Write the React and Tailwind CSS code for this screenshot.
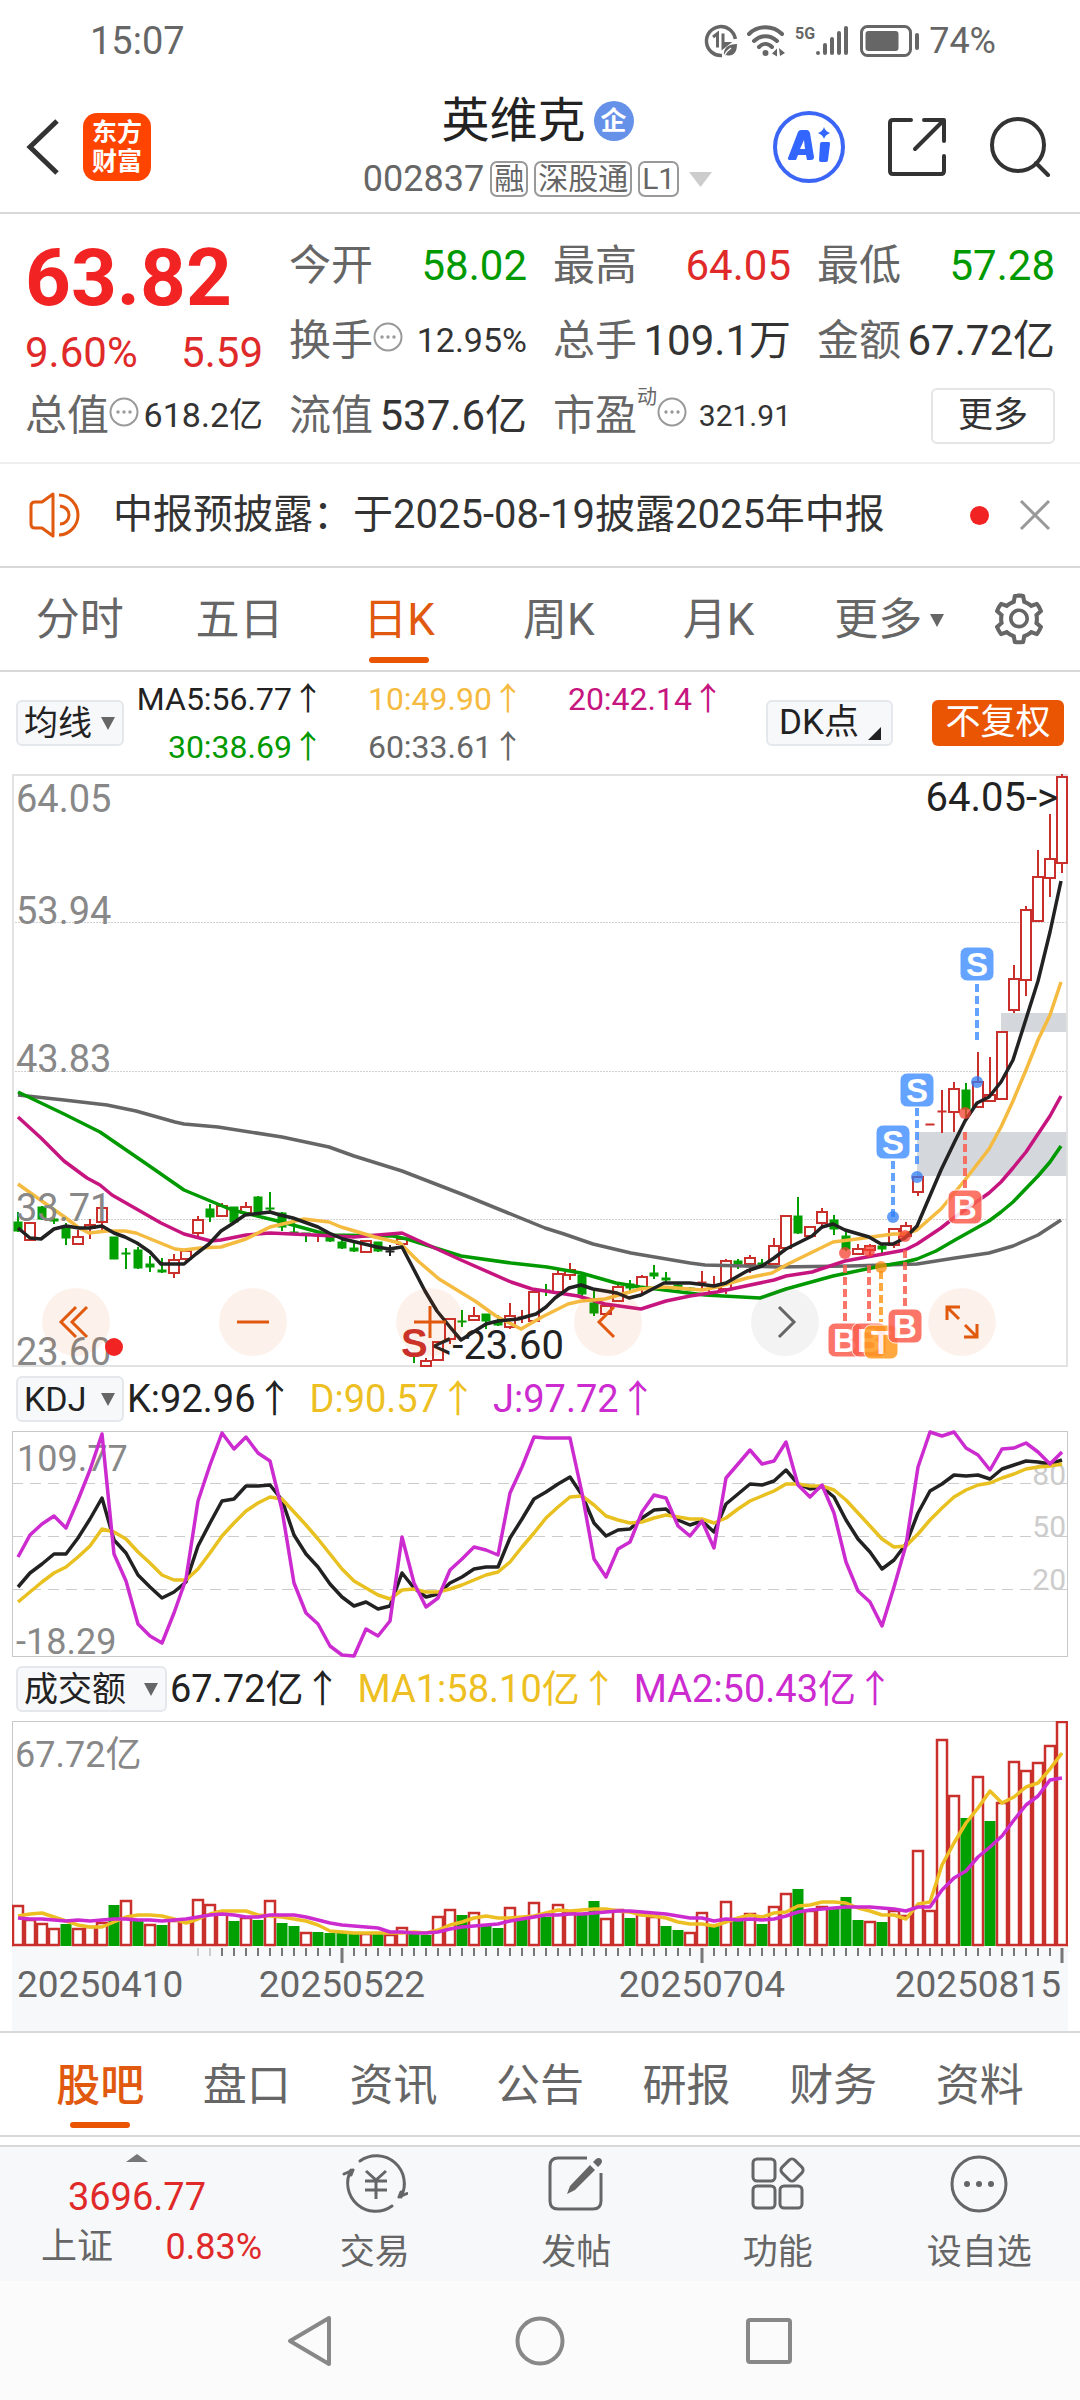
import { useState } from 'react';
import { AiOutlineSetting } from 'react-icons/ai';

// [direction, high, body top, body bottom, low], top of the panel is 0
const CANDLES = [
  ['g', 438, 448, 457, 458], ['r', 449, 449, 466, 466], ['g', 432, 433, 445, 446], ['g', 438, 445, 447, 450],
  ['g', 449, 454, 464, 471], ['r', 456, 463, 470, 470], ['r', 445, 451, 454, 465], ['r', 433, 434, 448, 456],
  ['g', 463, 463, 485, 485], ['g', 474, 479, 480, 495], ['g', 473, 476, 494, 495], ['g', 482, 490, 493, 498],
  ['g', 484, 496, 498, 499], ['r', 480, 486, 499, 504], ['r', 474, 477, 485, 487], ['r', 442, 446, 459, 465],
  ['g', 430, 435, 443, 448], ['r', 429, 432, 442, 443], ['g', 433, 433, 448, 449], ['r', 428, 433, 439, 440],
  ['g', 422, 423, 439, 439], ['g', 418, 434, 435, 437], ['g', 438, 439, 453, 457], ['g', 449, 458, 459, 459],
  ['g', 459, 459, 460, 468], ['r', 460, 461, 462, 468], ['g', 461, 462, 467, 468], ['g', 466, 468, 474, 475],
  ['g', 469, 474, 477, 478], ['r', 466, 467, 478, 479], ['g', 468, 468, 477, 478], ['k', 471, 477, 478, 482],
  ['r', 463, 465, 470, 471], ['g', 579, 581, 582, 589], ['r', 584, 587, 592, 593], ['r', 567, 568, 586, 587],
  ['r', 544, 545, 565, 570], ['g', 536, 547, 548, 553], ['r', 533, 542, 546, 547], ['g', 540, 540, 547, 555],
  ['g', 541, 547, 551, 552], ['r', 529, 542, 553, 555], ['r', 536, 543, 544, 549], ['r', 514, 518, 547, 548],
  ['g', 510, 516, 517, 522], ['r', 495, 500, 518, 520], ['r', 489, 496, 501, 506], ['g', 499, 501, 520, 522],
  ['g', 517, 529, 539, 542], ['r', 532, 532, 540, 541], ['r', 509, 513, 527, 528], ['g', 506, 510, 514, 517],
  ['r', 501, 503, 514, 521], ['g', 491, 499, 502, 505], ['g', 498, 504, 506, 509], ['g', 509, 511, 513, 516],
  ['g', 513, 514, 516, 517], ['r', 497, 508, 509, 517], ['r', 502, 513, 518, 519], ['r', 485, 487, 515, 520],
  ['g', 485, 487, 490, 495], ['r', 481, 484, 490, 499], ['g', 485, 489, 491, 493], ['r', 464, 472, 490, 490],
  ['r', 442, 442, 474, 474], ['g', 423, 442, 459, 460], ['r', 453, 453, 462, 463], ['r', 434, 438, 449, 455],
  ['g', 441, 446, 455, 461], ['g', 456, 462, 475, 477], ['r', 470, 475, 480, 481], ['r', 470, 472, 476, 481],
  ['g', 471, 472, 475, 480], ['r', 455, 455, 471, 474], ['r', 448, 452, 462, 464], ['r', 402, 403, 418, 422],
  ['r', 350, 350, 351, 351], ['r', 316, 337, 338, 359], ['r', 308, 315, 338, 358], ['g', 309, 316, 335, 343],
  ['r', 278, 308, 333, 334], ['r', 283, 321, 327, 328], ['r', 258, 258, 325, 326], ['r', 191, 205, 236, 239],
  ['r', 132, 136, 206, 222], ['r', 76, 103, 147, 148], ['r', 40, 85, 104, 123], ['r', 0, 3, 89, 99],
];

const AVERAGES = [
  { color: '#666666', points: '6,321 52,326 95,331 124,337 163,348 172,350 206,353 270,363 317,373 342,382 390,397 452,421 533,454 552,460 581,470 619,479 678,489 693,491 766,493 838,492 905,490 943,484 977,479 1001,472 1026,461 1049,446' },
  { color: '#009900', points: '6,318 52,340 88,358 136,391 172,416 220,436 270,448 317,461 381,462 395,465 449,482 499,489 535,493 569,499 604,509 628,513 693,521 748,524 774,515 821,502 869,492 893,488 905,485 924,477 943,466 977,447 989,438 1001,428 1026,402 1038,388 1049,372' },
  { color: '#c7157f', points: '6,343 29,364 52,387 75,404 88,411 100,421 149,449 172,460 199,467 209,466 234,461 258,459 302,461 342,463 390,459 449,486 499,508 520,515 566,522 593,530 629,535 654,527 678,522 705,518 762,506 774,502 800,498 833,487 893,476 905,470 929,454 943,443 977,419 989,408 1001,394 1014,378 1026,360 1038,342 1049,322' },
  { color: '#f5bb41', points: '6,410 34,430 54,444 67,454 77,459 95,457 113,457 124,459 163,475 172,476 188,474 209,473 234,465 258,453 292,445 317,448 329,453 363,463 388,469 406,487 427,505 463,527 484,542 509,555 530,543 556,530 569,527 593,525 628,515 652,513 690,516 705,513 735,504 760,499 774,491 821,468 845,465 881,460 893,460 905,456 929,435 953,406 977,375 989,353 1001,327 1014,296 1026,266 1038,241 1049,208' },
  { color: '#222222', points: '6,454 18,464 29,465 42,455 54,452 67,454 77,454 90,452 102,459 113,463 125,469 138,478 149,490 172,490 184,480 197,470 209,457 220,450 233,441 258,438 268,441 281,444 306,453 317,459 331,465 365,473 377,475 390,473 400,492 413,517 425,537 438,553 449,566 463,557 474,550 486,547 506,545 524,540 534,533 543,524 557,514 569,511 581,515 605,519 617,524 629,521 652,509 678,509 702,512 714,509 735,497 750,492 762,484 774,475 800,462 810,453 821,450 833,456 857,463 869,470 881,470 893,464 905,452 929,396 943,367 953,347 965,329 977,323 989,308 1001,286 1014,245 1026,207 1038,158 1049,107' },
];

const KDJ_K = [156, 142, 133, 123, 123, 107, 88, 67, 109, 122, 144, 156, 167, 161, 151, 115, 92, 70, 68, 55, 55, 54, 69, 104, 123, 136, 153, 166, 175, 171, 178, 175, 142, 157, 166, 163, 152, 146, 138, 136, 136, 107, 88, 68, 61, 53, 46, 64, 92, 105, 99, 98, 87, 79, 78, 89, 94, 90, 101, 73, 63, 53, 54, 50, 39, 53, 58, 56, 66, 89, 108, 121, 138, 129, 113, 82, 60, 53, 44, 45, 44, 48, 38, 34, 30, 31, 33, 29];
const KDJ_D = [171, 161, 151, 142, 136, 126, 115, 98, 101, 108, 121, 132, 144, 149, 149, 138, 122, 105, 92, 80, 72, 66, 68, 81, 94, 108, 123, 138, 150, 157, 164, 168, 159, 158, 161, 161, 158, 154, 149, 144, 141, 131, 116, 102, 87, 76, 66, 65, 74, 85, 89, 92, 91, 87, 84, 86, 88, 88, 92, 87, 78, 70, 65, 60, 53, 53, 55, 55, 59, 69, 82, 95, 108, 116, 115, 103, 89, 77, 66, 59, 54, 52, 47, 43, 38, 36, 35, 33];
const KDJ_J = [126, 104, 93, 85, 97, 69, 39, 3, 123, 150, 193, 205, 212, 182, 148, 70, 34, 2, 18, 6, 22, 30, 79, 152, 182, 193, 215, 224, 225, 198, 205, 190, 106, 152, 176, 167, 139, 128, 116, 119, 124, 62, 36, 6, 7, 7, 7, 62, 128, 146, 118, 111, 81, 64, 67, 95, 105, 90, 117, 47, 33, 19, 33, 30, 11, 54, 66, 54, 82, 131, 160, 171, 195, 156, 114, 36, 1, 5, 1, 17, 24, 39, 18, 17, 12, 21, 33, 21];

// a leading minus marks a falling day
const VOLUMES = [185, 199, 203, 208, -204, 208, 206, 202, -185, 180, -200, 204, -205, 200, 201, 179, 184, 193, -201, 197, -200, 180, -203, -206, 212, -212, -213, -212, -213, 213, -213, 214, 207, -214, -215, 196, 189, -195, 192, -205, -208, 187, -200, 182, -197, 184, 191, -194, -181, 198, 189, -198, 194, 196, -206, -210, 212, 192, -204, 181, -199, 193, -204, 186, 173, -169, 190, 186, -189, -177, -200, 201, -202, 190, 195, 130, 190, 19, 75, -98, 56, -101, 82, 41, 50, 42, 25, 1];
const VOLUME_MA1 = [195, 193, 192, 196, 200, 204, 206, 206, 201, 196, 194, 194, 195, 198, 202, 198, 193, 190, 190, 190, 194, 195, 196, 198, 200, 204, 210, 211, 212, 212, 212, 212, 212, 211, 212, 209, 204, 201, 197, 195, 197, 197, 196, 195, 192, 189, 190, 189, 188, 188, 190, 191, 194, 195, 197, 201, 203, 203, 205, 201, 197, 194, 196, 192, 191, 185, 184, 181, 181, 182, 187, 190, 194, 194, 198, 183, 181, 144, 122, 102, 87, 70, 82, 76, 66, 62, 48, 32];
const VOLUME_MA2 = [197, 198, 198, 199, 200, 199, 200, 199, 198, 198, 199, 199, 200, 199, 198, 196, 194, 193, 194, 196, 196, 194, 194, 194, 196, 199, 202, 204, 205, 206, 207, 211, 211, 212, 212, 211, 208, 206, 205, 204, 203, 200, 198, 196, 194, 194, 193, 193, 192, 191, 190, 190, 191, 192, 193, 195, 197, 197, 200, 198, 199, 198, 199, 198, 195, 191, 189, 188, 187, 186, 186, 186, 187, 188, 190, 186, 186, 169, 157, 150, 136, 126, 115, 99, 84, 75, 59, 57];

// x, dot y, dash start, dash end, badge centre y
const MARKS = [
  { text: 'S', x: 965, dot: 308, from: 210, to: 266, y: 190 },
  { text: 'S', x: 905, dot: 403, from: 334, to: 391, y: 316 },
  { text: 'S', x: 881, dot: 443, from: 387, to: 443, y: 368 },
  { text: 'B', x: 953, dot: 339, from: 358, to: 414, y: 433 },
  { text: 'B', x: 833, dot: 479, from: 491, to: 548, y: 566 },
  { text: 'B', x: 857, dot: 477, from: 491, to: 548, y: 566 },
  { text: 'T', x: 869, dot: 493, from: 497, to: 548, y: 568 },
  { text: 'B', x: 893, dot: 462, from: 476, to: 533, y: 552 },
];

const MARK_COLORS = {
  S: { badge: '#4a94ff', dot: '#2f7df6' },
  B: { badge: '#fb5f4e', dot: '#f5402f' },
  T: { badge: '#ff9a1f', dot: '#ff8c0a' },
};

const CANDLE_COLORS = { r: '#c9302c', g: '#00a000', k: '#222222' };

const dayX = (i) => 6 + i * 12;
const toPoints = (values) => values.map((y, i) => `${dayX(i)},${y}`).join(' ');

function Line({ points, color }) {
  return <polyline points={points} fill="none" stroke={color} strokeWidth="3.500" strokeLinejoin="round" />;
}

function StatusBar() {
  return (
    <div className="flex h-[82px] items-center justify-between pr-[84px] pl-[90px] text-[#666]">
      <span className="text-[38px] leading-[48px]">15:07</span>
      <div className="flex items-center">
        <svg width="34" height="34" viewBox="0 0 34 34" fill="none" stroke="currentColor" className="mr-[9px]">
          <path d="M18 31.5A14.5 14.5 0 1 1 31.3 15" strokeWidth="3.5" />
          <path d="M9 13l4.500-3.500v14M19 9.500v14l5-4h-4" strokeWidth="3" />
          <path d="M20 32c-1-8 4-12 13-12 0 9-4 13-11 11z" fill="currentColor" stroke="none" />
          <path d="M20 32c2-4 4-6 7-8" stroke="#fff" strokeWidth="1.500" />
        </svg>
        <svg width="40" height="34" viewBox="0 0 40 34" fill="none" stroke="currentColor" strokeWidth="4" className="mr-[8px]">
          <path d="M2 10c9-9 24-9 33 0M7 17c7-6.500 16-6.500 23 0M12 23c4-4 9-4 13 0" strokeLinecap="round" />
          <circle cx="18.500" cy="29" r="3" fill="currentColor" stroke="none" />
          <path d="M25 29.500l5-5v8M33 24v8M32 24l6 5-5 3z" fill="currentColor" stroke="none" />
        </svg>
        <span className="mb-[14px] text-[16px] leading-[16px] font-bold">5G</span>
        <svg width="34" height="32" viewBox="0 0 34 32" stroke="currentColor" strokeWidth="4" strokeLinecap="round" className="mr-[11px]">
          <path d="M3 28v.1M10 20v8M17 14v14M24 8v20M31 3v25" />
        </svg>
        <svg width="60" height="32" viewBox="0 0 60 32" fill="none" className="mr-[9px]">
          <rect x="1.500" y="1.500" width="49" height="29" rx="6" stroke="currentColor" strokeWidth="3" />
          <rect x="5.500" y="6" width="33" height="20" rx="3" fill="currentColor" />
          <path d="M57 10v13" stroke="currentColor" strokeWidth="4" strokeLinecap="round" />
        </svg>
        <span className="text-[36px] leading-[48px]">74%</span>
      </div>
    </div>
  );
}

function Tag({ children }) {
  return (
    <span className="flex h-[36px] items-center rounded-[7px] border-2 border-[#999] px-[2px] text-[30px] leading-[30px]">
      {children}
    </span>
  );
}

function Header() {
  return (
    <header className="grid h-[132px] grid-cols-[1fr_auto_1fr] items-center border-b-2 border-[#d8d8d8] pr-[29px] pl-[24px]">
      <div className="flex items-center">
        <button aria-label="返回" className="mr-[22px]">
          <svg width="37" height="58" viewBox="0 0 37 58" fill="none" stroke="#333" strokeWidth="5">
            <path d="M33 3L6 29l27 26" />
          </svg>
        </button>
        <div className="flex h-[68px] w-[68px] flex-col items-center justify-center rounded-[14px] bg-[#ff4400] text-[25px] leading-[29px] font-bold text-white">
          <span>东方</span>
          <span>财富</span>
        </div>
      </div>

      <div className="flex flex-col items-center">
        <h1 className="flex h-[56px] items-center gap-[8px] text-[48px] leading-[56px] text-[#222]">
          英维克
          <span className="flex h-[40px] w-[40px] items-center justify-center rounded-full bg-[#6592e8] text-[26px] leading-[40px] font-bold text-white">
            企
          </span>
        </h1>
        <div className="mt-[8px] flex h-[44px] items-center gap-[6px] text-[36px] leading-[44px] text-[#666]">
          <span>002837</span>
          <Tag>融</Tag>
          <Tag>深股通</Tag>
          <Tag>L1</Tag>
          <svg width="23" height="15" viewBox="0 0 23 15" className="ml-[4px]">
            <path d="M0 0h23L11.500 15z" fill="#ccc" />
          </svg>
        </div>
      </div>

      <div className="flex items-center justify-end">
        <button aria-label="AI" className="mr-[42px]">
          <svg width="72" height="72" viewBox="0 0 72 72" fill="none">
            <circle cx="36" cy="36" r="34" stroke="#3b66f5" strokeWidth="4" />
            <path d="M15 47l10-26q1-2 3-2h6q2 0 3 3l4 24q0 3-3 3h-4l-1-5h-8l-2 5h-5q-4 0-3-2zM27 38h5l-1-9z" fill="#3366ff" />
            <path d="M49 31h7q1 0 1 2l-2 16q0 2-2 2h-5q-2 0-2-2l1-16q0-2 2-2zM51 16q1 4 6 6-5 2-6 6-1-4-6-6 5-2 6-6z" fill="#3366ff" />
          </svg>
        </button>
        <button aria-label="分享" className="mr-[42px]">
          <svg width="60" height="60" viewBox="0 0 60 60" fill="none" stroke="#333" strokeWidth="4" strokeLinecap="round" strokeLinejoin="round">
            <path d="M24 3H6q-3 0-3 3v48q0 3 3 3h48q3 0 3-3V39M37 3h20v21M56 4L28 32" />
          </svg>
        </button>
        <button aria-label="搜索">
          <svg width="62" height="60" viewBox="0 0 62 60" fill="none" stroke="#333" strokeWidth="4" strokeLinecap="round">
            <circle cx="29" cy="28" r="26" />
            <path d="M47 46l12 12" />
          </svg>
        </button>
      </div>
    </header>
  );
}

function MoreDots() {
  return (
    <svg width="30" height="30" viewBox="0 0 30 30" fill="#999" className="mb-[8px] flex-none">
      <circle cx="15" cy="15" r="13.500" fill="none" stroke="#999" strokeWidth="2" />
      <circle cx="9" cy="15" r="1.700" />
      <circle cx="15" cy="15" r="1.700" />
      <circle cx="21" cy="15" r="1.700" />
    </svg>
  );
}

function Stat({ label, sup, dots, value, valueClass }) {
  return (
    <div className="flex h-[75px] items-center justify-between whitespace-nowrap">
      <dt className="flex items-center text-[42px] leading-[75px] text-[#666]">
        {label}
        {sup && <span className="mb-[38px] text-[20px] leading-[20px]">{sup}</span>}
        {dots && <MoreDots />}
      </dt>
      <dd className={valueClass || 'text-[42px] text-[#333]'}>{value}</dd>
    </div>
  );
}

function Quote() {
  return (
    <section className="grid grid-cols-4 gap-x-[26px] border-b-2 border-[#eee] px-[25px] pt-[14px] pb-[9px]">
      <div>
        <div className="flex h-[100px] items-center text-[80px] leading-[100px] font-bold text-[#f22323]">63.82</div>
        <div className="flex h-[50px] items-center justify-between text-[42px] leading-[50px] text-[#e02a2a]">
          <span>9.60%</span>
          <span>5.59</span>
        </div>
        <dl>
          <Stat label="总值" dots value="618.2亿" valueClass="text-[34px] text-[#333]" />
        </dl>
      </div>
      <dl>
        <Stat label="今开" value="58.02" valueClass="text-[42px] text-[#009900]" />
        <Stat label="换手" dots value="12.95%" valueClass="text-[34px] text-[#333]" />
        <Stat label="流值" value="537.6亿" />
      </dl>
      <dl>
        <Stat label="最高" value="64.05" valueClass="text-[42px] text-[#e02a2a]" />
        <Stat label="总手" value="109.1万" />
        <Stat label="市盈" sup="动" dots value="321.91" valueClass="text-[30px] text-[#333]" />
      </dl>
      <div>
        <dl>
          <Stat label="最低" value="57.28" valueClass="text-[42px] text-[#009900]" />
          <Stat label="金额" value="67.72亿" />
        </dl>
        <div className="flex h-[75px] items-center justify-end">
          <button className="h-[56px] w-[124px] rounded-[6px] border-2 border-[#e5e5e5] text-[35px] leading-[52px] text-[#333]">
            更多
          </button>
        </div>
      </div>
    </section>
  );
}

function Notice() {
  return (
    <section className="flex h-[104px] items-center border-b-2 border-[#d8d8d8] pr-[29px] pl-[29px]">
      <svg width="52" height="46" viewBox="0 0 52 46" fill="none" stroke="#e0590f" strokeWidth="3" strokeLinejoin="round">
        <path d="M24 2L13 10H6q-4 0-4 4v18q0 4 4 4h7l11 8z" />
        <path d="M30 3c10 0 19 9 19 20s-9 20-19 20M31 14c5 1 9 4 9 9s-4 9-9 9" />
      </svg>
      <p className="ml-[32px] flex-1 text-[40px] leading-[48px] whitespace-nowrap text-[#333]">
        中报预披露：于2025-08-19披露2025年中报
      </p>
      <span className="mr-[30px] h-[19px] w-[19px] rounded-full bg-[#f22323]" />
      <button aria-label="关闭">
        <svg width="32" height="32" viewBox="0 0 32 32" stroke="#999" strokeWidth="3">
          <path d="M2 2l28 28M30 2L2 30" />
        </svg>
      </button>
    </section>
  );
}

function Caret({ className }) {
  return (
    <svg width="14" height="13" viewBox="0 0 14 13" className={className}>
      <path d="M0 0h14L7 13z" fill="#666" />
    </svg>
  );
}

function PeriodTabs() {
  const [active, setActive] = useState('日K');

  return (
    <nav className="flex h-[104px] items-stretch border-b-2 border-[#d8d8d8]">
      <div className="grid flex-1 grid-cols-6">
        {['分时', '五日', '日K', '周K', '月K', '更多'].map((tab) => (
          <button
            key={tab}
            onClick={() => setActive(tab)}
            className={`relative flex items-center justify-center pt-[2px] text-[44px] leading-[60px] ${
              tab === active ? 'text-[#e0590f]' : 'text-[#666]'
            } ${tab === '更多' ? 'pl-[22px]' : ''}`}
          >
            {tab}
            {tab === '更多' && <Caret className="ml-[8px]" />}
            {tab === active && (
              <span className="absolute bottom-[7px] left-1/2 h-[6px] w-[60px] -translate-x-1/2 rounded-full bg-[#ea5504]" />
            )}
          </button>
        ))}
      </div>
      <button aria-label="设置" className="flex w-[122px] items-center justify-center">
        <AiOutlineSetting size={58} color="#666" />
      </button>
    </nav>
  );
}

function Picker({ label, value, className }) {
  return (
    <div className="relative flex flex-none items-center">
      <select
        aria-label={label}
        defaultValue={value}
        className={`h-[46px] appearance-none rounded-[6px] border-2 border-[#e4e7ec] bg-[#f7f8fa] pl-[6px] text-[34px] leading-[42px] text-[#222] ${className}`}
      >
        <option>{value}</option>
      </select>
      <Caret className="pointer-events-none absolute right-[9px]" />
    </div>
  );
}

function MaHeader() {
  return (
    <div className="flex h-[102px] items-center px-[16px]">
      <Picker label="主图指标" value="均线" className="w-[108px]" />
      <div className="grid w-[600px] grid-cols-[1fr_200px_200px] text-right text-[32px] leading-[48px] whitespace-nowrap">
        <span className="text-[#222]">MA5:56.77↑</span>
        <span className="text-[#f5bb41]">10:49.90↑</span>
        <span className="text-[#c7157f]">20:42.14↑</span>
        <span className="text-[#009900]">30:38.69↑</span>
        <span className="text-[#666]">60:33.61↑</span>
      </div>
      <button className="ml-auto flex h-[46px] w-[127px] items-end rounded-[6px] border-2 border-[#e4e7ec] bg-[#f7f8fa] pl-[11px] text-[35px] leading-[42px] text-[#222]">
        DK点
        <svg width="13" height="13" viewBox="0 0 13 13" className="mb-[4px] ml-[9px]">
          <path d="M13 0v13H0z" fill="#222" />
        </svg>
      </button>
      <button className="ml-[39px] h-[46px] w-[132px] rounded-[6px] bg-[#ea5504] text-[35px] leading-[44px] text-white">
        不复权
      </button>
    </div>
  );
}

function Candle({ i, data }) {
  const [dir, high, top, bottom, low] = data;
  const x = dayX(i);
  const color = CANDLE_COLORS[dir];
  const hollow = dir === 'r' && bottom - top > 2;

  return (
    <g stroke={color} strokeWidth="2">
      {high < top && <path d={`M${x} ${high}V${top}`} />}
      {low > bottom && <path d={`M${x} ${bottom}V${low}`} />}
      {hollow ? (
        <rect x={x - 5} y={top} width="10" height={bottom - top} fill="#fff" />
      ) : (
        <rect x={x - 4} y={top} width="8" height={bottom - top} fill={color} strokeWidth="1" />
      )}
    </g>
  );
}

function Mark({ mark }) {
  const { text, x, dot, from, to, y } = mark;
  const color = MARK_COLORS[text];

  return (
    <g>
      <path d={`M${x} ${from}V${to}`} stroke={color.badge} strokeWidth="4" strokeDasharray="8 4" opacity="0.85" />
      <circle cx={x} cy={dot} r="6" fill={color.dot} opacity="0.75" />
      <g opacity="0.85">
        <rect x={x - 17} y={y - 17} width="34" height="34" rx="7" fill={color.badge} stroke="#fff" strokeWidth="1" />
        <text x={x} y={y + 12} textAnchor="middle" fill="#fff" className="font-['Liberation_Sans'] text-[33px] font-bold">
          {text}
        </text>
      </g>
    </g>
  );
}

function RoundButton({ label, gray, children }) {
  return (
    <button
      aria-label={label}
      className={`flex h-[68px] w-[68px] items-center justify-center rounded-full ${
        gray ? 'bg-[#666]/8 text-[#666]' : 'bg-[#ea5504]/8 text-[#e0590f]'
      }`}
    >
      <svg width="40" height="40" viewBox="0 0 40 40" fill="none" stroke="currentColor" strokeWidth="3">
        {children}
      </svg>
    </button>
  );
}

function KLineChart() {
  return (
    <div className="relative mx-[12px]">
      <svg viewBox="0 0 1056 593" className="block w-full overflow-visible font-[Roboto]">
        <rect x="905" y="358" width="150" height="44" fill="#d4d7dc" />
        <rect x="989" y="239" width="66" height="19" fill="#d4d7dc" />
        <path d="M0 148.500H1055M0 297.500H1055M0 445.500H1055" stroke="#d0d0d0" strokeDasharray="2 1" />
        <rect x="1" y="1" width="1054" height="591" fill="none" stroke="#e2e2e2" strokeWidth="2" />
        {CANDLES.map((data, i) => (
          <Candle key={i} i={i} data={data} />
        ))}
        {AVERAGES.map((line) => (
          <Line key={line.color} points={line.points} color={line.color} />
        ))}
        <g fill="#888" className="text-[38px]">
          <text x="4" y="38">64.05</text>
          <text x="4" y="150">53.94</text>
          <text x="4" y="298">43.83</text>
          <text x="4" y="447">33.71</text>
          <text x="4" y="591">23.60</text>
        </g>
        <circle cx="102" cy="573" r="9" fill="#f22323" />
        <text x="389" y="583" fill="#c9302c" className="font-['Liberation_Sans'] text-[40px] font-bold">S</text>
        <g fill="#222" className="text-[40px]">
          <text x="420" y="585">&lt;-23.60</text>
          <text x="1046" y="37" textAnchor="end">64.05-&gt;</text>
        </g>
        {MARKS.map((mark) => (
          <Mark key={`${mark.x}-${mark.y}`} mark={mark} />
        ))}
      </svg>
      <div className="absolute inset-x-0 bottom-[11px] flex justify-between pr-[72px] pl-[30px]">
        <RoundButton label="最早">
          <path d="M20 5L5 20l15 15M31 5L16 20l15 15" />
        </RoundButton>
        <RoundButton label="缩小">
          <path d="M4 20h32" />
        </RoundButton>
        <RoundButton label="放大">
          <path d="M4 20h32M20 4v32" />
        </RoundButton>
        <RoundButton label="向左">
          <path d="M26 5L11 20l15 15" />
        </RoundButton>
        <RoundButton label="向右" gray>
          <path d="M14 5l15 15-15 15" />
        </RoundButton>
        <RoundButton label="全屏">
          <path d="M5 18V5h13M5 5l12 12M23 23l12 12M35 22v13H22" />
        </RoundButton>
      </div>
    </div>
  );
}

function IndicatorHeader({ label, value, className, items }) {
  return (
    <div className="flex h-[64px] items-center pl-[16px]">
      <Picker label={label} value={value} className={className} />
      <div className="ml-[3px] flex gap-[16px] text-[38px] leading-[48px] whitespace-nowrap">
        {items.map((item) => (
          <span key={item.text} style={{ color: item.color }}>
            {item.text}
          </span>
        ))}
      </div>
    </div>
  );
}

function KdjChart() {
  return (
    <div className="mx-[12px]">
      <svg viewBox="0 0 1056 226" className="block w-full overflow-visible font-[Roboto]">
        <path d="M0 52.500H1055M0 105.500H1055M0 158.500H1055" stroke="#ccc" strokeDasharray="11 7" />
        <rect x="0.500" y="0.500" width="1055" height="225" fill="none" stroke="#c8c8c8" />
        <g fill="#888" className="text-[36px]">
          <text x="5" y="40">109.77</text>
          <text x="4" y="223">-18.29</text>
        </g>
        <g fill="#ccc" textAnchor="end" className="text-[30px]">
          <text x="1054" y="54">80</text>
          <text x="1054" y="106">50</text>
          <text x="1054" y="159">20</text>
        </g>
        <Line points={toPoints(KDJ_K)} color="#222" />
        <Line points={toPoints(KDJ_D)} color="#e8c020" />
        <Line points={toPoints(KDJ_J)} color="#cc2bd0" />
      </svg>
    </div>
  );
}

function VolumeChart() {
  return (
    <div className="mx-[12px]">
      <svg viewBox="0 0 1056 226" className="block w-full font-[Roboto,'Noto_Sans_CJK_SC']">
        <path d="M0.500 226V0.500H1055.500V226" fill="none" stroke="#c8c8c8" />
        <text x="3" y="46" fill="#888" className="text-[36px]">67.72亿</text>
        {VOLUMES.map((v, i) =>
          v < 0 ? (
            <rect key={i} x={dayX(i) - 5.5} y={-v - 1} width="11" height={226 + v} fill="#00a000" />
          ) : (
            <rect key={i} x={dayX(i) - 5} y={v} width="10" height={224 - v} fill="#fff" stroke="#c9302c" strokeWidth="2.500" />
          ),
        )}
        <Line points={toPoints(VOLUME_MA1)} color="#edbf22" />
        <Line points={toPoints(VOLUME_MA2)} color="#cc2bd0" />
      </svg>
      <svg viewBox="0 0 1056 84" className="block w-full bg-[#f7f8fa] font-[Roboto]">
        {VOLUMES.map((_, i) => {
          if (i < 15) return null;
          const major = i === 27 || i === 57 || i === 87;
          return (
            <path
              key={i}
              d={`M${dayX(i)} 1V${major ? 16 : 9}`}
              stroke={i < 17 ? '#ccc' : '#777'}
              strokeWidth={major ? 3 : 2}
            />
          );
        })}
        <g fill="#666" className="text-[37px]">
          <text x="5" y="50">20250410</text>
          <text x="330" y="50" textAnchor="middle">20250522</text>
          <text x="690" y="50" textAnchor="middle">20250704</text>
          <text x="1049" y="50" textAnchor="end">20250815</text>
        </g>
      </svg>
    </div>
  );
}

function InfoTabs() {
  const [active, setActive] = useState('股吧');

  return (
    <nav className="mb-[8px] grid h-[106px] grid-cols-7 border-y-2 border-[#d8d8d8] px-[27px]">
      {['股吧', '盘口', '资讯', '公告', '研报', '财务', '资料'].map((tab) => (
        <button
          key={tab}
          onClick={() => setActive(tab)}
          className={`relative pt-[4px] text-[44px] leading-[60px] ${
            tab === active ? 'font-medium text-[#e0590f]' : 'text-[#666]'
          }`}
        >
          {tab}
          {tab === active && (
            <span className="absolute bottom-[7px] left-1/2 h-[6px] w-[60px] -translate-x-1/2 rounded-full bg-[#ea5504]" />
          )}
        </button>
      ))}
    </nav>
  );
}

function BarItem({ label, children }) {
  return (
    <button className="flex flex-1 flex-col items-center pt-[6px] text-[35px] leading-[44px] text-[#666]">
      <svg width="66" height="62" viewBox="0 0 66 62" fill="none" stroke="currentColor" strokeWidth="3" className="mb-[16px]">
        {children}
      </svg>
      {label}
    </button>
  );
}

function BottomBar() {
  return (
    <div className="flex h-[136px] border-t-2 border-[#d8d8d8] bg-[#f7f8fa]">
      <button className="flex w-[274px] flex-col items-center text-[#e02a2a]">
        <svg width="22" height="8" viewBox="0 0 22 8" className="mt-[7px]">
          <path d="M11 0l11 8H0z" fill="#777" />
        </svg>
        <span className="mt-[13px] text-[38px] leading-[44px]">3696.77</span>
        <span className="mt-[4px] flex w-full justify-between pr-[12px] pl-[41px] text-[36px] leading-[48px]">
          <span className="text-[#666]">上证</span>
          <span>0.83%</span>
        </span>
      </button>
      <BarItem label="交易">
        <path d="M18 8a28 28 0 0 1 41 36M50 53a28 28 0 0 1-41-36" strokeLinecap="round" />
        <path d="M2 21l9-4M57 44l8-3.500M11 17l-2 5M57 44l2-5" strokeLinecap="round" />
        <path d="M24 18l10 9 10-9M34 27v19M23 28h22M23 37h22" />
      </BarItem>
      <BarItem label="发帖">
        <path d="M44 5H15q-8 0-8 8v35q0 8 8 8h35q8 0 8-8V20" />
        <path d="M47 12l5 5-20 20-8 4 3-8zM50 9l3-3q3-2 5 0t0 5l-3 3z" fill="currentColor" stroke="none" />
      </BarItem>
      <BarItem label="功能">
        <rect x="8" y="6" width="22" height="22" rx="4" />
        <rect x="8" y="33" width="22" height="22" rx="4" />
        <rect x="35" y="33" width="22" height="22" rx="4" />
        <rect x="38" y="8" width="18" height="18" rx="4" transform="rotate(45 47 17)" />
      </BarItem>
      <BarItem label="设自选">
        <circle cx="33" cy="31" r="27" />
        <g fill="currentColor" stroke="none">
          <circle cx="21" cy="31" r="3" />
          <circle cx="33" cy="31" r="3" />
          <circle cx="45" cy="31" r="3" />
        </g>
      </BarItem>
    </div>
  );
}

function SystemNav() {
  return (
    <div className="flex h-[119px] items-center justify-center gap-[181px] bg-[#fbfbfb] pr-[3px] text-[#888]">
      <button aria-label="后退">
        <svg width="48" height="52" viewBox="0 0 48 52" fill="none" stroke="currentColor" strokeWidth="4" strokeLinejoin="round">
          <path d="M43 3v46L4 26z" />
        </svg>
      </button>
      <button aria-label="主页">
        <svg width="50" height="50" viewBox="0 0 50 50" fill="none" stroke="currentColor" strokeWidth="4">
          <circle cx="25" cy="25" r="22.500" />
        </svg>
      </button>
      <button aria-label="最近任务">
        <svg width="46" height="46" viewBox="0 0 46 46" fill="none" stroke="currentColor" strokeWidth="4">
          <rect x="2" y="2" width="42" height="42" rx="2" />
        </svg>
      </button>
    </div>
  );
}

export default function App() {
  return (
    <div className="bg-white font-[Roboto,'Noto_Sans_CJK_SC',sans-serif]">
      <StatusBar />
      <Header />
      <Quote />
      <Notice />
      <PeriodTabs />
      <MaHeader />
      <KLineChart />
      <IndicatorHeader
        label="副图指标一"
        value="KDJ"
        className="w-[108px]"
        items={[
          { text: 'K:92.96↑', color: '#222222' },
          { text: 'D:90.57↑', color: '#edbf22' },
          { text: 'J:97.72↑', color: '#cc2bd0' },
        ]}
      />
      <KdjChart />
      <IndicatorHeader
        label="副图指标二"
        value="成交额"
        className="w-[151px]"
        items={[
          { text: '67.72亿↑', color: '#222222' },
          { text: 'MA1:58.10亿↑', color: '#edbf22' },
          { text: 'MA2:50.43亿↑', color: '#cc2bd0' },
        ]}
      />
      <VolumeChart />
      <InfoTabs />
      <BottomBar />
      <SystemNav />
    </div>
  );
}
